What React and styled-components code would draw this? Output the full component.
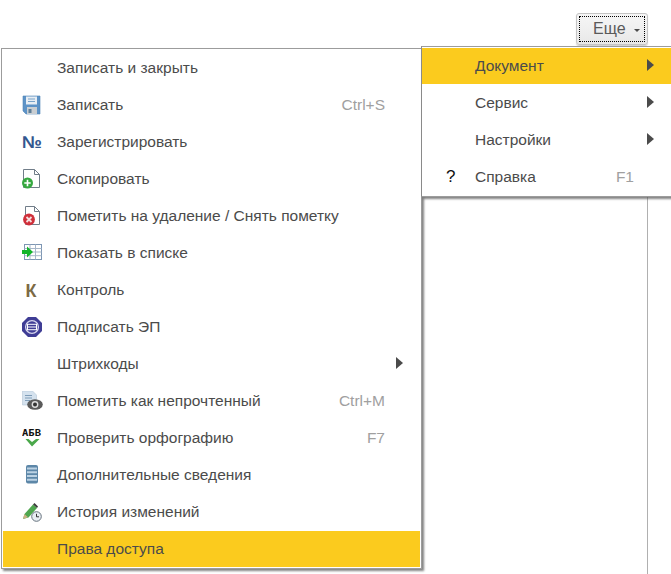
import React from "react";
import styled, { createGlobalStyle } from "styled-components";

const Global = createGlobalStyle`
  html, body { margin: 0; padding: 0; background: #fff; }
  body { width: 671px; height: 574px; overflow: hidden; font-family: "Liberation Sans", Arial, sans-serif; }
`;
const Page = styled.div`position: relative; width: 671px; height: 574px; overflow: hidden; background: #fff;`;
const ColumnLine = styled.div`position: absolute; left: 647px; top: 190px; bottom: 0; width: 1px; background: #b0b0b0;`;
const TopBar = styled.div`display: flex; justify-content: flex-end; height: 47px; padding: 13px 23px 0 0; box-sizing: border-box;`;
const MoreButton = styled.div`
  width: 72px; height: 32px; box-sizing: border-box; border: 1px solid #c4c4c4; border-radius: 3px;
  background: linear-gradient(#f6f6f6, #e8e8e8); padding: 2px; box-shadow: 0 1px 1px #d0d0d0;
`;
const MoreInner = styled.div`
  height: 100%; box-sizing: border-box; border: 1px dotted #000; display: flex; align-items: center;
  padding-left: 13px; gap: 8px; font-size: 16px; color: #5a5a5a;
`;
const Caret = styled.span`width: 0; height: 0; border-left: 3px solid transparent; border-right: 3px solid transparent; border-top: 3px solid #4b4b4b; margin-top: 2px;`;
const Menus = styled.div`position: relative; display: flex; align-items: flex-start;`;
const Menu = styled.div`
  display: flex; flex-direction: column; gap: 1px; box-sizing: border-box; background: #fff; padding: 1px;
  border: 1px solid #9c9c9c; box-shadow: 2px 2px 2px rgba(80,80,80,.7);
`;
const MainMenu = styled(Menu)`width: 421px; margin: 1px 0 0 1px;`;
const SideMenu = styled(Menu)`position: relative; width: 250px; margin: -1px 0 0 -1px; border-right: 0; padding-left: 0; padding-right: 0; border-left-color: #8a8a8a;`;
const Row = styled.div`
  display: flex; align-items: center; height: 36px; font-size: 15.5px; color: #4b4b4b; white-space: nowrap;
  background: ${p => (p.$active ? "#fbcb1e" : "transparent")};
`;
const IconSlot = styled.span`width: ${p => p.$w}px; flex: none; display: flex; align-items: center; padding-left: ${p => p.$pl}px; box-sizing: border-box; color: #111; font-size: 17px;`;
const Label = styled.span`flex: 1;`;
const Shortcut = styled.span`color: #a0a0a0; margin-right: ${p => p.$mr}px;`;
const Arrow = styled.span`width: 0; height: 0; border-top: 6px solid transparent; border-bottom: 6px solid transparent; border-left: 7px solid #4b4b4b; margin-right: ${p => p.$mr}px; position: relative; top: -1px;`;

const Ico = ({ children }) => <svg width="21" height="20" viewBox="0 0 21 20" style={{ display: "block" }}>{children}</svg>;
const Sheet = ({ d }) => <path d={d} fill="#fff" stroke="#717d89" />;

const Save = () => <Ico><path d="M1 1h17v18H4l-3-3z" fill="#5d93c7" stroke="#4f83b5" strokeWidth=".6"/><rect x="4" y="1.500" width="11" height="8" fill="#e8eef4"/><path d="M6 4h7M6 6.500h7" stroke="#7aa4c9"/><rect x="5" y="12" width="10" height="7" fill="#c9ced2"/><rect x="6.500" y="14" width="3" height="4" fill="#5f7f98"/></Ico>;
const Num = () => <Ico><text x="0" y="16" fontFamily="Liberation Sans, Arial, sans-serif" fontWeight="700" fontSize="17" textLength="20" lengthAdjust="spacingAndGlyphs" fill="#33578f">№</text></Ico>;
const Copy = () => <Ico><Sheet d="M1.500 .5h11l5 5v13h-16z M12.500 .5v5h5"/><circle cx="5.500" cy="14" r="5.500" fill="#35a83f"/><path d="M5.500 10.800v6.400M2.300 14h6.400" stroke="#fff" strokeWidth="1.600"/></Ico>;
const Del = () => <Ico><Sheet d="M3.500 .5h9l5 5v13h-14z M12.500 .5v5h5"/><circle cx="7" cy="13.500" r="5.900" fill="#cf2f3a"/><path d="M4.500 11l5 5M9.500 11l-5 5" stroke="#f6dede" strokeWidth="1.800"/></Ico>;
const ListI = () => <Ico><rect x="2.500" y="1.500" width="17" height="15" fill="#fff" stroke="#7d96b3"/><path d="M8 1.500v15M13.500 1.500v15M2.500 5.500h17M2.500 9h17M2.500 12.700h17" stroke="#a7b7c9"/><path d="M0 7h5V3.500l6 5.500-6 5.500V11H0z" fill="#14b52a"/></Ico>;
const KI = () => <Ico><text x="3.500" y="16.500" fontFamily="Liberation Sans, Arial, sans-serif" fontWeight="700" fontSize="18" fill="#7c6a45">К</text></Ico>;
const Sign = () => <Ico><path d="M6 0h8l6 6v8l-6 6H6l-6-6V6z" fill="#3f3d95"/><circle cx="10" cy="10" r="6.400" fill="none" stroke="#d8d8ee" strokeWidth="1.300"/><rect x="5.500" y="7.300" width="9" height="5.400" fill="#3f3d95" stroke="#fff" strokeWidth="1"/><path d="M5.500 10h9" stroke="#fff"/></Ico>;
const Unread = () => <Ico><path d="M.5 0h10l4 4v10h-14z" fill="#d5e2ee" stroke="#b4c6d6" strokeWidth=".6"/><path d="M3 4.500h7M3 7h7M3 9.500h5" stroke="#7f9db8"/><ellipse cx="13" cy="13.500" rx="7.800" ry="5.300" fill="#5a5a5a"/><circle cx="13" cy="13.500" r="3.400" fill="#ddd"/><circle cx="13" cy="13.500" r="2" fill="#333"/></Ico>;
const Spell = () => <Ico><text x="0" y="8" fontFamily="DejaVu Sans Mono, monospace" fontWeight="700" fontSize="9" textLength="19" lengthAdjust="spacingAndGlyphs" fill="#111">АБВ</text><path d="M3.500 11l3 0 3.500 3 4-3h3.500L10 18.500z" fill="#4aa84a"/></Ico>;
const Info = () => <Ico><rect x="4" y="0" width="12" height="18.500" rx="2" fill="#5d87a8"/><path d="M5 3.500h10M5 7.200h10M5 11h10M5 14.700h10" stroke="#bcd2e3" strokeWidth="2"/></Ico>;
const Hist = () => <Ico><path d="M1 17l1.500-5L11 2.500l4 3.500-8.500 9.500z" fill="#4fa64f"/><path d="M11 2.500l1.500-1.500 3.500 3.500L15 6z" fill="#3a3a3a"/><path d="M1 17l1.500-5 3.500 3.300z" fill="#cdb184"/><circle cx="14.500" cy="14.500" r="4.800" fill="#e8edf2" stroke="#66727d"/><path d="M14.500 11.800v3h2.500" fill="none" stroke="#333"/></Ico>;

const main = [
  ["Записать и закрыть"],
  ["Записать", <Save/>, "Ctrl+S"],
  ["Зарегистрировать", <Num/>],
  ["Скопировать", <Copy/>],
  ["Пометить на удаление / Снять пометку", <Del/>],
  ["Показать в списке", <ListI/>],
  ["Контроль", <KI/>],
  ["Подписать ЭП", <Sign/>],
  ["Штрихкоды", null, null, true],
  ["Пометить как непрочтенный", <Unread/>, "Ctrl+M"],
  ["Проверить орфографию", <Spell/>, "F7"],
  ["Дополнительные сведения", <Info/>],
  ["История изменений", <Hist/>],
  ["Права доступа"],
];
const side = [
  ["Документ", true],
  ["Сервис", true],
  ["Настройки", true],
  ["Справка", false, "F1", "?"],
];

export default function App() {
  return (
    <Page>
      <Global/>
      <ColumnLine/>
      <TopBar><MoreButton><MoreInner>Еще<Caret/></MoreInner></MoreButton></TopBar>
      <Menus>
        <MainMenu>
          {main.map(([t, icon, sc, sub], i) => (
            <Row key={t} $active={i === main.length - 1}>
              <IconSlot $w={54} $pl={19}>{icon}</IconSlot>
              <Label>{t}</Label>
              {sc && <Shortcut $mr={35}>{sc}</Shortcut>}
              {sub && <Arrow $mr={17}/>}
            </Row>
          ))}
        </MainMenu>
        <SideMenu>
          {side.map(([t, sub, sc, glyph], i) => (
            <Row key={t} $active={i === 0}>
              <IconSlot $w={53} $pl={24}>{glyph}</IconSlot>
              <Label>{t}</Label>
              {sc && <Shortcut $mr={37}>{sc}</Shortcut>}
              {sub && <Arrow $mr={17}/>}
            </Row>
          ))}
        </SideMenu>
      </Menus>
    </Page>
  );
}
